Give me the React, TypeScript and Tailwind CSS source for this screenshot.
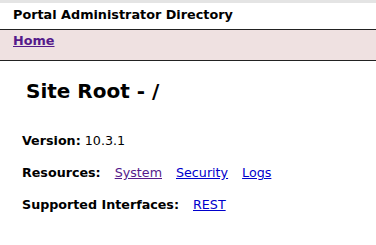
export default function App() {
  return (
    <div className="w-[376px] h-[245px] bg-white text-black font-['DejaVu_Sans',Verdana,sans-serif] overflow-hidden">
      <div className="h-[3px] bg-[#e4e4e4]" />
      <div className="h-[27px] border-b border-[#222] px-[13px] pt-[4px] text-[12.8px] font-bold leading-[16px]">
        Portal Administrator Directory
      </div>
      <div className="h-[31px] bg-[#efe1e1] border-b border-[#222] px-[13px] pt-[3px] text-[12.8px] font-bold leading-[16px]">
        <a href="#" className="text-[#551a8b] underline">Home</a>
      </div>
      <h1 className="pl-[26px] pt-[18px] text-[20px] font-bold leading-[24px]">Site Root - /</h1>
      <div className="pl-[22px] pt-[30px] flex flex-col gap-[16px] text-[12.7px] leading-[16px]">
        <div>
          <span className="font-bold">Version:</span> 10.3.1
        </div>
        <div className="flex gap-[14px]">
          <span className="font-bold">Resources:</span>
          <a href="#" className="text-[#551a8b] underline">System</a>
          <a href="#" className="text-[#0000cc] underline">Security</a>
          <a href="#" className="text-[#0000cc] underline">Logs</a>
        </div>
        <div className="flex gap-[14px]">
          <span className="font-bold">Supported Interfaces:</span>
          <a href="#" className="text-[#0000cc] underline">REST</a>
        </div>
      </div>
    </div>
  );
}
